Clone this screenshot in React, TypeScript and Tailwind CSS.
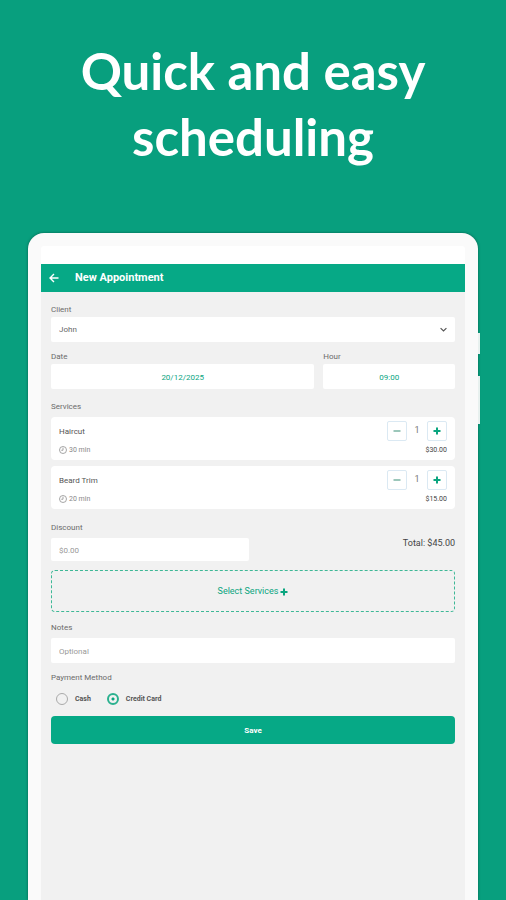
import { useState } from 'react'

const initialServices = [
  { id: 'haircut', name: 'Haircut', minutes: 30, price: 30, quantity: 1 },
  { id: 'beard', name: 'Beard Trim', minutes: 20, price: 15, quantity: 1 },
]

const labelClass = 'block text-[8px] leading-3 text-[#6b6b6b]'
const fieldClass = 'block w-full rounded-xs bg-white px-2 pt-px text-[8px] outline-none'
const stepClass = 'flex h-5 w-5 items-center justify-center rounded-xs border border-[#dbe9f3]'

function money(value: number) {
  return `$${value.toFixed(2)}`
}

function ClockIcon() {
  return (
    <svg className="h-2 w-2" viewBox="0 0 16 16" fill="none" stroke="currentColor" strokeWidth="1.5">
      <circle cx="8" cy="8" r="7" />
      <path d="M8 3.5V8.5H4.5" />
    </svg>
  )
}

function PlusIcon() {
  return (
    <svg className="h-2 w-2" viewBox="0 0 16 16" fill="none" stroke="currentColor" strokeWidth="4">
      <path d="M8 1V15M1 8H15" />
    </svg>
  )
}

function MinusIcon() {
  return (
    <svg className="h-2 w-2" viewBox="0 0 16 16" fill="none" stroke="currentColor" strokeWidth="4">
      <path d="M1 8H15" />
    </svg>
  )
}

export default function App() {
  const [services, setServices] = useState(initialServices)
  const [payment, setPayment] = useState('card')

  const total = services.reduce((sum, s) => sum + s.price * s.quantity, 0)

  const changeQuantity = (id: string, delta: number) => {
    setServices((list) =>
      list.map((s) => (s.id === id ? { ...s, quantity: Math.max(1, s.quantity + delta) } : s)),
    )
  }

  return (
    <main className="flex min-h-screen flex-col bg-[#089f7e] px-7 pt-[38px] font-['Roboto',sans-serif]">
      <h1 className="mx-auto max-w-96 text-center font-['Lato',sans-serif] text-[51px] leading-[66px] font-bold text-white">
        Quick and easy scheduling
      </h1>

      {/* Tablet */}
      <div className="relative mt-[63px] flex flex-1 flex-col rounded-t-2xl bg-[#fafafa] px-[13px] pt-[13px] shadow-[0_0_3px_rgba(0,0,0,0.4)]">
        <span className="absolute top-[100px] -right-[2px] h-[21px] w-[2px] bg-[#e8f1ef]" />
        <span className="absolute top-[143px] -right-[2px] h-12 w-[2px] bg-[#e8f1ef]" />

        <div className="flex flex-1 flex-col rounded-t-xs bg-[#f1f1f1]">
          <div className="h-[18px] rounded-t-xs bg-white" />

          <header className="flex h-7 items-center gap-4 bg-[#06a986] px-2 text-white">
            <button type="button" aria-label="Back">
              <svg className="h-[10px] w-[10px]" viewBox="0 0 20 20" fill="none" stroke="currentColor" strokeWidth="2.8">
                <path d="M19 10H2M10 2L2 10L10 18" />
              </svg>
            </button>
            <h2 className="text-[11px] font-bold">New Appointment</h2>
          </header>

          <form className="px-[10px] pt-3" onSubmit={(e) => e.preventDefault()}>
            <label htmlFor="client" className={labelClass}>Client</label>
            <div className="relative mt-px">
              <select id="client" className={`${fieldClass} h-[25px] appearance-none text-[#666]`}>
                <option>John</option>
              </select>
              <svg
                className="pointer-events-none absolute top-[9px] right-2 h-[7px] w-[7px] text-[#555]"
                viewBox="0 0 12 12"
                fill="none"
                stroke="currentColor"
                strokeWidth="2"
              >
                <path d="M1 3.5L6 8.5L11 3.5" />
              </svg>
            </div>

            <div className="mt-[9px] grid grid-cols-[2fr_1fr] gap-[9px]">
              <div>
                <label htmlFor="date" className={labelClass}>Date</label>
                <input id="date" defaultValue="20/12/2025" className={`${fieldClass} mt-px h-[25px] text-center text-[#0aa57f]`} />
              </div>
              <div>
                <label htmlFor="hour" className={labelClass}>Hour</label>
                <input id="hour" defaultValue="09:00" className={`${fieldClass} mt-px h-[25px] text-center text-[#0aa57f]`} />
              </div>
            </div>

            {/* Services */}
            <h3 className={`${labelClass} mt-3`}>Services</h3>
            <ul className="mt-1 space-y-[6px]">
              {services.map((s) => (
                <li key={s.id} className="flex h-[43px] justify-between rounded-sm bg-white px-2 pt-1">
                  <div className="pt-[5px] text-[8px] leading-3">
                    <p className="text-[#555]">{s.name}</p>
                    <p className="mt-[6px] flex items-center gap-[2px] text-[7px] text-[#888]">
                      <ClockIcon />
                      {s.minutes} min
                    </p>
                  </div>
                  <div className="flex flex-col items-end">
                    <div className="flex items-center">
                      <button
                        type="button"
                        aria-label={`Remove one ${s.name}`}
                        className={`${stepClass} text-[#9cc7ba]`}
                        onClick={() => changeQuantity(s.id, -1)}
                      >
                        <MinusIcon />
                      </button>
                      <span className="w-5 text-center text-[9px] text-[#777]">{s.quantity}</span>
                      <button
                        type="button"
                        aria-label={`Add one ${s.name}`}
                        className={`${stepClass} text-[#0aa57f]`}
                        onClick={() => changeQuantity(s.id, 1)}
                      >
                        <PlusIcon />
                      </button>
                    </div>
                    <p className="mt-[3px] text-[7px] leading-3 text-[#444]">{money(s.price * s.quantity)}</p>
                  </div>
                </li>
              ))}
            </ul>

            {/* Discount and total */}
            <div className="mt-[13px] flex items-center justify-between">
              <div className="w-[49%]">
                <label htmlFor="discount" className={labelClass}>Discount</label>
                <input id="discount" placeholder="$0.00" className={`${fieldClass} mt-1 h-[23px] placeholder:text-[#999]`} />
              </div>
              <p className="pt-1 text-[9px] text-[#444]">Total: {money(total)}</p>
            </div>

            <button
              type="button"
              className="mt-[9px] flex h-[42px] w-full items-center justify-center gap-[2px] rounded-sm border border-dashed border-[#3db896] pt-px text-[9px] text-[#0aa57f]"
            >
              Select Services
              <PlusIcon />
            </button>

            <label htmlFor="notes" className={`${labelClass} mt-[10px]`}>Notes</label>
            <input id="notes" placeholder="Optional" className={`${fieldClass} mt-1 h-[25px] placeholder:text-[#999]`} />

            <fieldset className="mt-[9px]">
              <legend className={labelClass}>Payment Method</legend>
              <div className="mt-[9px] flex gap-4 px-[5px]">
                {[
                  { value: 'cash', text: 'Cash' },
                  { value: 'card', text: 'Credit Card' },
                ].map((p) => (
                  <label key={p.value} className="flex h-3 items-center gap-[7px] text-[7px] font-bold text-[#555]">
                    <input
                      type="radio"
                      name="payment"
                      value={p.value}
                      checked={payment === p.value}
                      onChange={() => setPayment(p.value)}
                      className="h-3 w-3 appearance-none rounded-full border border-[#aaa] checked:border-2 checked:border-[#2bb18f] checked:bg-[radial-gradient(circle,#0aa57f_1px,transparent_2px)]"
                    />
                    {p.text}
                  </label>
                ))}
              </div>
            </fieldset>

            <button type="submit" className="mt-[11px] h-7 w-full rounded-sm bg-[#06a986] pt-px text-[8px] font-bold text-white">
              Save
            </button>
          </form>
        </div>
      </div>
    </main>
  )
}
